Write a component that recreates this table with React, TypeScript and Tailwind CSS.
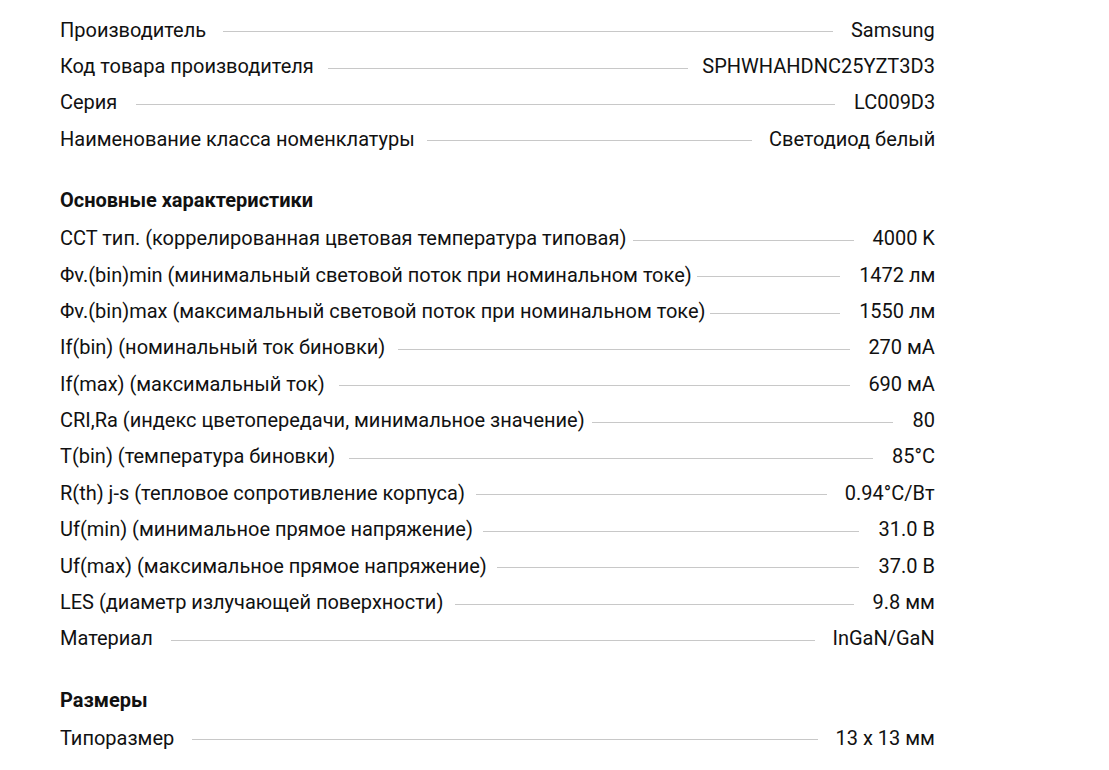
import React from "react";

type Row = [string, string];

const sections: { title?: string; rows: Row[] }[] = [
  {
    rows: [
      ["Производитель", "Samsung"],
      ["Код товара производителя", "SPHWHAHDNC25YZT3D3"],
      ["Серия", "LC009D3"],
      ["Наименование класса номенклатуры", "Светодиод белый"],
    ],
  },
  {
    title: "Основные характеристики",
    rows: [
      ["CCT тип. (коррелированная цветовая температура типовая)", "4000 K"],
      ["Φv.(bin)min (минимальный световой поток при номинальном токе)", "1472 лм"],
      ["Φv.(bin)max (максимальный световой поток при номинальном токе)", "1550 лм"],
      ["If(bin) (номинальный ток биновки)", "270 мА"],
      ["If(max) (максимальный ток)", "690 мА"],
      ["CRI,Ra (индекс цветопередачи, минимальное значение)", "80"],
      ["T(bin) (температура биновки)", "85°C"],
      ["R(th) j-s (тепловое сопротивление корпуса)", "0.94°C/Вт"],
      ["Uf(min) (минимальное прямое напряжение)", "31.0 В"],
      ["Uf(max) (максимальное прямое напряжение)", "37.0 В"],
      ["LES (диаметр излучающей поверхности)", "9.8 мм"],
      ["Материал", "InGaN/GaN"],
    ],
  },
  {
    title: "Размеры",
    rows: [["Типоразмер", "13 x 13 мм"]],
  },
];

function SpecRow({ label, value }: { label: string; value: string }) {
  return (
    <div className="flex h-[36.4px] items-center gap-[20.5px]">
      <span className="inline-block origin-left scale-x-[1.025] whitespace-nowrap">{label}</span>
      <div className="mt-[3px] h-px flex-1 bg-[#c8c8c8]" />
      <span className="inline-block origin-right scale-x-[1.025] whitespace-nowrap">{value}</span>
    </div>
  );
}

export default function App() {
  return (
    <div
      className="min-h-[770px] w-full bg-white pt-[12px] text-[19.5px] text-[#111]"
      style={{ fontFamily: "Roboto, 'Liberation Sans', sans-serif" }}
    >
      <div className="ml-[60px] w-[875px]">
        {sections.map((s, i) => (
          <div key={i} className={i > 0 ? "mt-[24px]" : ""}>
            {s.title && (
              <div className="flex h-[39px] items-center font-bold">
                <span className="inline-block origin-left scale-x-[1.025] whitespace-nowrap">{s.title}</span>
              </div>
            )}
            {s.rows.map(([l, v]) => (
              <SpecRow key={l} label={l} value={v} />
            ))}
          </div>
        ))}
      </div>
    </div>
  );
}
